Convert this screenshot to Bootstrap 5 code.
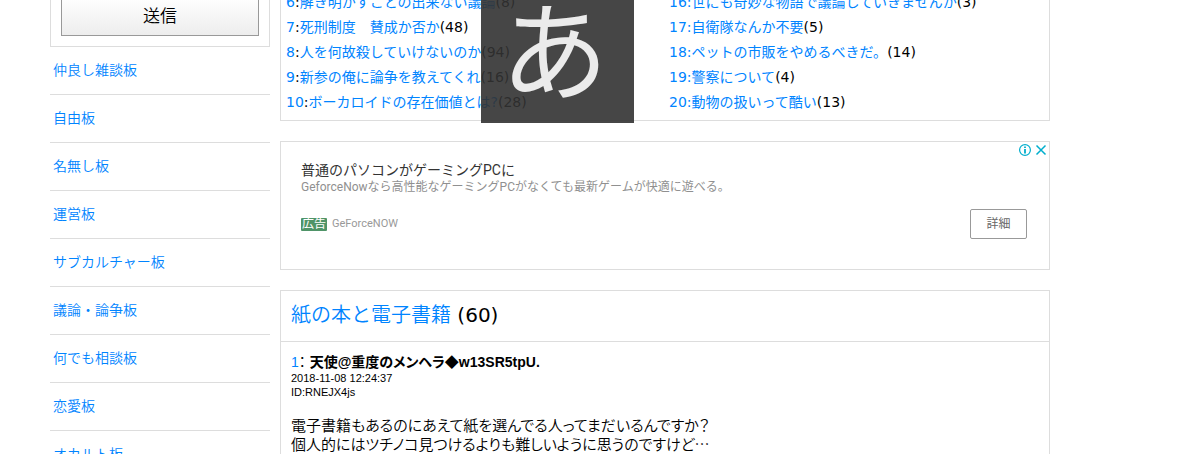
<!DOCTYPE html>
<html lang="ja">
<head>
<meta charset="utf-8">
<meta name="viewport" content="width=device-width, initial-scale=1">
<title>紙の本と電子書籍</title>
<link href="https://cdn.jsdelivr.net/npm/bootstrap@5.3.0/dist/css/bootstrap.min.css" rel="stylesheet">
<style>
body { font-family: "DejaVu Sans", "Noto Sans CJK JP", sans-serif; font-size: 14px; font-weight: 400; color: #000; overflow-x: hidden; }
a { color: #0084ff; text-decoration: none; }
.page { max-width: 1050px; padding-left: 50px; margin-top: -12px; gap: 10px; }
.side { width: 220px; }
.panel { border: 1px solid #ddd; }
.form-panel { padding: 7px 10px 10px; }
.send { height: 40px; font-size: 17px; font-weight: 350; line-height: 36px; color: #000; border: 1px solid #999; background: linear-gradient(#fff, #ededed); }
.boards a { display: block; height: 48px; padding-left: 3px; line-height: 46px; font-weight: 350; border-bottom: 1px solid #ddd; }
.threads { padding: 1px 5px 5px; line-height: 25px; }
.ad { font-family: Roboto, "Noto Sans CJK JP", sans-serif; margin: 20px 0; padding: 19px 22px 30px 20px; }
.ad-title { font-size: 14px; line-height: 18px; color: #333; }
.ad-desc { font-size: 12px; line-height: 16px; color: #909090; }
.ad-foot { margin-top: 14px; height: 30px; font-size: 11px; color: #999; gap: 5px; }
.ad-tag { font-size: 12px; line-height: 13px; padding: 0 1px; border-radius: 1px; color: #fff; background: #4f9468; }
.detail { width: 57px; height: 30px; font-size: 12px; line-height: 24px; color: #666; background: #fff; border: 1px solid #999; border-radius: 2px; }
.ad-icons { top: 1px; right: 2px; gap: 3px; }
.topic { font-size: 20px; line-height: 48px; padding: 0 10px 2px; border-bottom: 1px solid #ddd; font-weight: 400; }
.topic a { font-weight: 350; }
.post { padding: 11px 10px 20px; font-family: "Liberation Sans", "Noto Sans CJK JP", sans-serif; }
.post-name { font-size: 14px; line-height: 18px; font-feature-settings: "palt"; }
.post-meta { font-size: 11px; line-height: 14px; }
.post-text { font-family: "Noto Sans CJK JP", sans-serif; font-size: 15px; font-weight: 350; line-height: 19px; margin-top: 16px; font-feature-settings: "palt"; }
.ime { left: 481px; width: 153px; height: 123px; padding-right: 6px; background: rgba(50, 50, 50, .9); color: #ebebeb; font-size: 108px; line-height: 90px; font-family: "Noto Sans CJK JP", sans-serif; font-weight: 400; }
</style>
</head>
<body>
<div class="page d-flex align-items-start">
  <aside class="side flex-shrink-0">
    <form class="panel form-panel"><button type="button" class="send w-100 p-0 d-block">送信</button></form>
    <nav class="boards">
      <a href="#">仲良し雑談板</a>
      <a href="#">自由板</a>
      <a href="#">名無し板</a>
      <a href="#">運営板</a>
      <a href="#">サブカルチャー板</a>
      <a href="#">議論・論争板</a>
      <a href="#">何でも相談板</a>
      <a href="#">恋愛板</a>
      <a href="#">オカルト板</a>
    </nav>
  </aside>
  <main class="flex-grow-1">
    <section class="panel threads">
      <div class="row g-0">
        <ul class="col-6 list-unstyled mb-0 text-nowrap">
          <li><a href="#">6</a>:<a href="#">解き明かすことの出来ない議論</a>(8)</li>
          <li><a href="#">7</a>:<a href="#">死刑制度　賛成か否か</a>(48)</li>
          <li><a href="#">8</a>:<a href="#">人を何故殺していけないのか</a>(94)</li>
          <li><a href="#">9</a>:<a href="#">新参の俺に論争を教えてくれ</a>(16)</li>
          <li><a href="#">10</a>:<a href="#">ボーカロイドの存在価値とは?</a>(28)</li>
        </ul>
        <ul class="col-6 list-unstyled mb-0 ps-1 text-nowrap">
          <li><a href="#">16:世にも奇妙な物語で議論していきませんか</a>(3)</li>
          <li><a href="#">17:自衛隊なんか不要</a>(5)</li>
          <li><a href="#">18:ペットの市販をやめるべきだ。</a>(14)</li>
          <li><a href="#">19:警察について</a>(4)</li>
          <li><a href="#">20:動物の扱いって酷い</a>(13)</li>
        </ul>
      </div>
    </section>
    <section class="panel ad position-relative">
      <div class="ad-icons position-absolute d-flex">
        <svg width="14" height="14" viewBox="0 0 14 14" fill="none" stroke="#00aecd"><circle cx="7" cy="7" r="5.4" stroke-width="1.2"/><path d="M7 6v4.500M7 3.400v1.500" stroke-width="1.8"/></svg>
        <svg width="12" height="14" viewBox="0 0 12 14" fill="none" stroke="#00aecd" stroke-width="1.5"><path d="M1.500 2.500l9 9M10.500 2.500l-9 9"/></svg>
      </div>
      <div class="ad-title">普通のパソコンがゲーミングPCに</div>
      <div class="ad-desc">GeforceNowなら高性能なゲーミングPCがなくても最新ゲームが快適に遊べる。</div>
      <div class="ad-foot d-flex align-items-center">
        <span class="ad-tag">広告</span><span>GeForceNOW</span>
        <button type="button" class="detail ms-auto p-0">詳細</button>
      </div>
    </section>
    <article class="panel">
      <h2 class="topic mb-0"><a href="#">紙の本と電子書籍</a> (60)</h2>
      <div class="post">
        <div class="post-name"><a href="#">1</a>： <b>天使@重度のメンヘラ◆w13SR5tpU.</b></div>
        <div class="post-meta">2018-11-08 12:24:37<br>ID:RNEJX4js</div>
        <p class="post-text mb-0">電子書籍もあるのにあえて紙を選んでる人ってまだいるんですか？<br>個人的にはツチノコ見つけるよりも難しいように思うのですけど…</p>
      </div>
    </article>
  </main>
</div>
<div class="ime position-absolute top-0 text-center">あ</div>
<script src="https://cdn.jsdelivr.net/npm/bootstrap@5.3.0/dist/js/bootstrap.bundle.min.js"></script>
</body>
</html>
